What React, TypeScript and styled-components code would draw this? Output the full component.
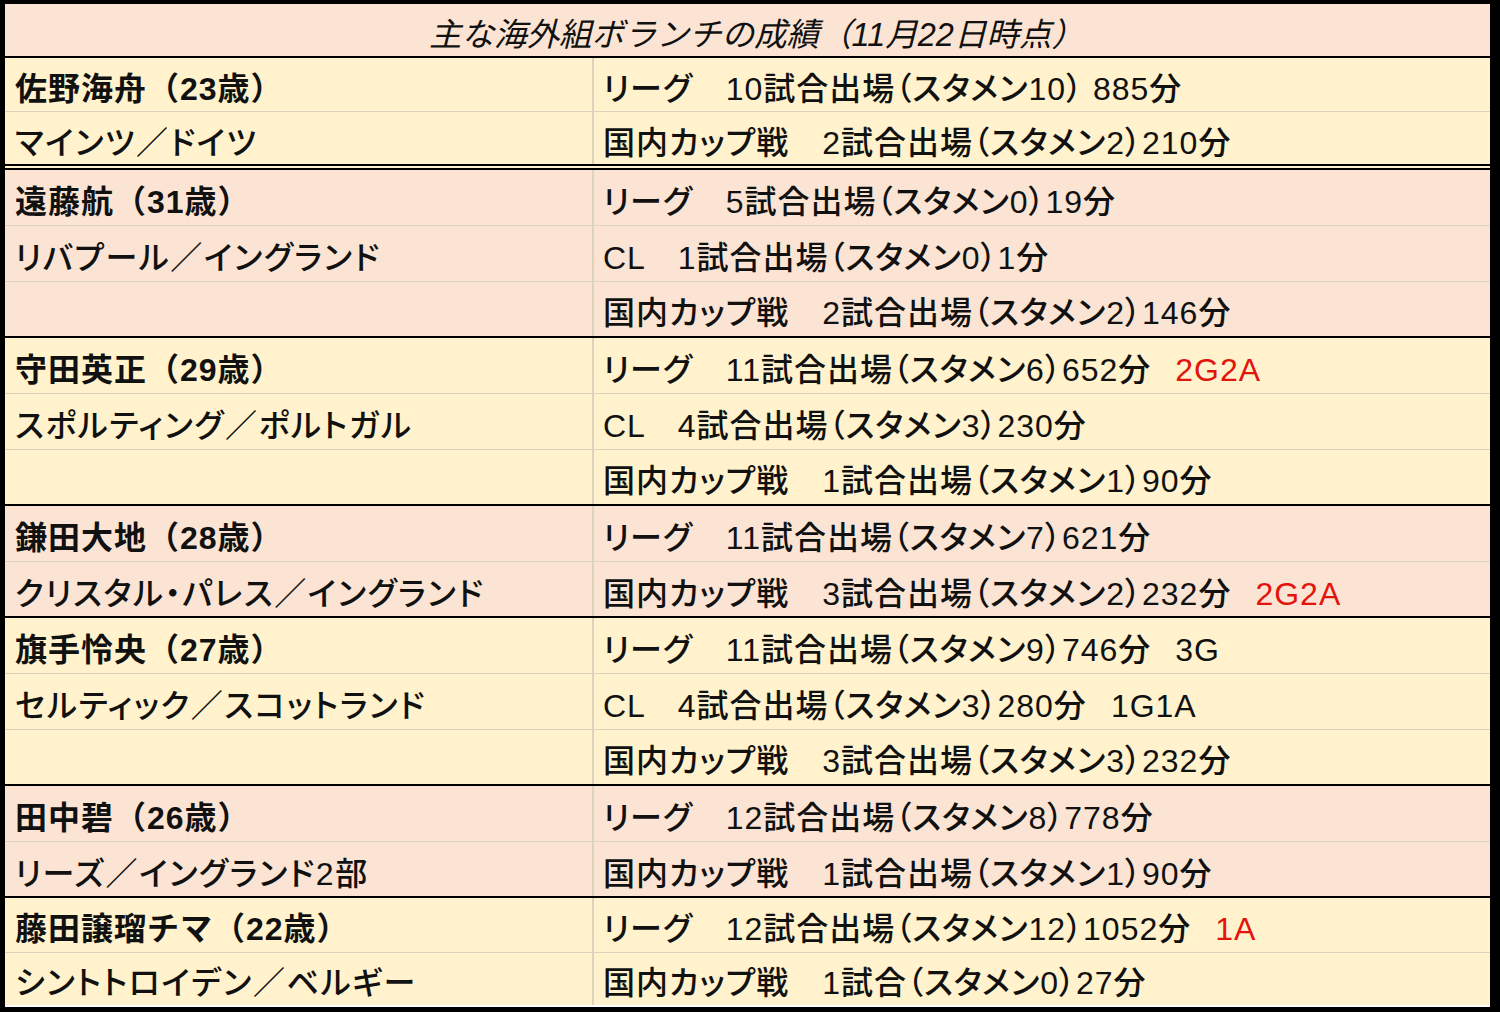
import React from 'react';
import styled, { createGlobalStyle } from 'styled-components';

const fontFamily = '"Liberation Sans", "Noto Sans CJK JP", sans-serif';

const cream = '#fff2cc';
const pink = '#fbe4d3';
const gridLine = '#dcd3bb';

const GlobalStyle = createGlobalStyle`
  html, body {
    margin: 0;
    padding: 0;
    background: #ffffff;
  }
`;

const Frame = styled.div`
  box-sizing: border-box;
  width: 1500px;
  height: 1012px;
  border-style: solid;
  border-color: #000;
  border-width: 4px 10px 5px 5px;
  display: flex;
  flex-direction: column;
  font-family: ${fontFamily};
  color: #111;
`;

const Title = styled.div`
  height: 54px;
  background: ${pink};
  border-bottom: 2px solid #000;
  display: flex;
  align-items: center;
  justify-content: center;
  font-size: 32.5px;
  font-style: italic;
  padding: 2px 0 0 18px;
  box-sizing: border-box;
`;

interface GroupProps {
  $tone: string;
  $height: number;
  $double?: boolean;
}

const Group = styled.div<GroupProps>`
  height: ${({ $height }) => $height}px;
  background: ${({ $tone }) => $tone};
  display: grid;
  grid-template-columns: 589px 1fr;
  grid-auto-rows: 1fr;
  border-bottom: ${({ $double }) => ($double ? '6px double #000' : '2px solid #000')};
  &:last-child {
    border-bottom: none;
  }
`;

type Kind = 'name' | 'club' | 'stat';

interface CellProps {
  $first: boolean;
  $kind: Kind;
}

const Cell = styled.div<CellProps>`
  display: flex;
  align-items: center;
  padding: 3px 0 0 ${({ $kind }) => ($kind === 'stat' ? '9px' : '10px')};
  font-size: 32px;
  font-weight: ${({ $kind }) => ($kind === 'name' ? 700 : 500)};
  font-feature-settings: ${({ $kind }) => ($kind === 'name' ? 'normal' : "'palt'")};
  letter-spacing: ${({ $kind }) => ($kind === 'club' ? '1.6px' : '1px')};
  white-space: nowrap;
  border-top: ${({ $first }) => ($first ? 'none' : `1px solid ${gridLine}`)};
  border-right: ${({ $kind }) => ($kind === 'stat' ? 'none' : `2px solid ${gridLine}`)};
`;

const Note = styled.span<{ $red?: boolean }>`
  margin-left: 24px;
  color: ${({ $red }) => ($red ? '#e3140c' : 'inherit')};
`;

interface Line {
  text: string;
  note?: string;
  red?: boolean;
}

interface Player {
  name: string;
  club: string;
  tone: string;
  height: number;
  double?: boolean;
  lines: Line[];
}

const players: Player[] = [
  {
    name: '佐野海舟（23歳）',
    club: 'マインツ／ドイツ',
    tone: cream,
    height: 106,
    double: true,
    lines: [
      { text: 'リーグ　10試合出場（スタメン10） 885分' },
      { text: '国内カップ戦　2試合出場（スタメン2）210分' }
    ]
  },
  {
    name: '遠藤航（31歳）',
    club: 'リバプール／イングランド',
    tone: pink,
    height: 166,
    lines: [
      { text: 'リーグ　5試合出場（スタメン0）19分' },
      { text: 'CL　1試合出場（スタメン0）1分' },
      { text: '国内カップ戦　2試合出場（スタメン2）146分' }
    ]
  },
  {
    name: '守田英正（29歳）',
    club: 'スポルティング／ポルトガル',
    tone: cream,
    height: 166,
    lines: [
      { text: 'リーグ　11試合出場（スタメン6）652分', note: '2G2A', red: true },
      { text: 'CL　4試合出場（スタメン3）230分' },
      { text: '国内カップ戦　1試合出場（スタメン1）90分' }
    ]
  },
  {
    name: '鎌田大地（28歳）',
    club: 'クリスタル・パレス／イングランド',
    tone: pink,
    height: 110,
    lines: [
      { text: 'リーグ　11試合出場（スタメン7）621分' },
      { text: '国内カップ戦　3試合出場（スタメン2）232分', note: '2G2A', red: true }
    ]
  },
  {
    name: '旗手怜央（27歳）',
    club: 'セルティック／スコットランド',
    tone: cream,
    height: 166,
    lines: [
      { text: 'リーグ　11試合出場（スタメン9）746分', note: '3G' },
      { text: 'CL　4試合出場（スタメン3）280分', note: '1G1A' },
      { text: '国内カップ戦　3試合出場（スタメン3）232分' }
    ]
  },
  {
    name: '田中碧（26歳）',
    club: 'リーズ／イングランド2部',
    tone: pink,
    height: 110,
    lines: [
      { text: 'リーグ　12試合出場（スタメン8）778分' },
      { text: '国内カップ戦　1試合出場（スタメン1）90分' }
    ]
  },
  {
    name: '藤田譲瑠チマ（22歳）',
    club: 'シントトロイデン／ベルギー',
    tone: cream,
    height: 107,
    lines: [
      { text: 'リーグ　12試合出場（スタメン12）1052分', note: '1A', red: true },
      { text: '国内カップ戦　1試合（スタメン0）27分' }
    ]
  }
];

const App = () => (
  <>
    <GlobalStyle />
    <Frame>
      <Title>主な海外組ボランチの成績（11月22日時点）</Title>
      {players.map((p) => (
        <Group key={p.name} $tone={p.tone} $height={p.height} $double={p.double}>
          {p.lines.map((line, i) => {
            const kind: Kind = i === 0 ? 'name' : 'club';
            const left = i === 0 ? p.name : i === 1 ? p.club : '';
            return (
              <React.Fragment key={i}>
                <Cell $first={i === 0} $kind={kind}>
                  {left}
                </Cell>
                <Cell $first={i === 0} $kind="stat">
                  <span>
                    {line.text}
                    {line.note && <Note $red={line.red}>{line.note}</Note>}
                  </span>
                </Cell>
              </React.Fragment>
            );
          })}
        </Group>
      ))}
    </Frame>
  </>
);

export default App;
